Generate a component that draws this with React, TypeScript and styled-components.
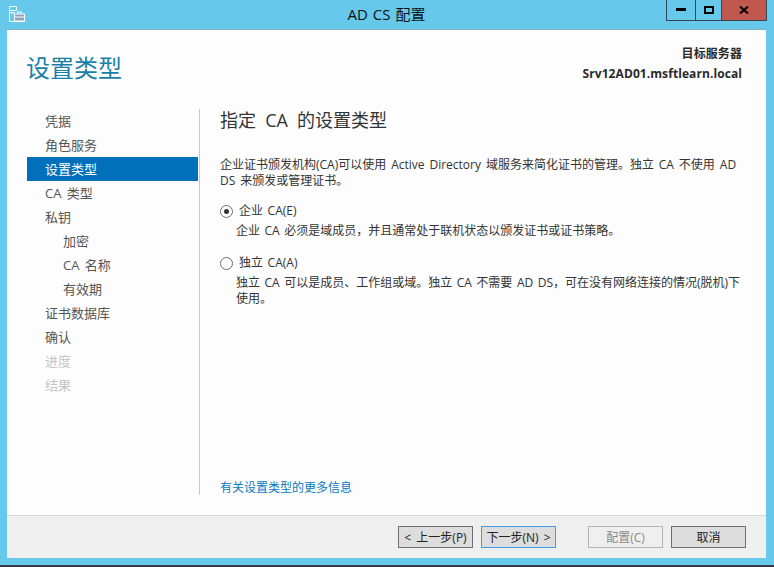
import React from "react";
import styled, { createGlobalStyle } from "styled-components";

const Global = createGlobalStyle`
  html, body { margin: 0; padding: 0; background: #333c44; }
  body { font-family: "Open Sans", "Noto Sans CJK SC", sans-serif; }
  * { box-sizing: border-box; }
`;
const LATIN = `"Open Sans", "Noto Sans CJK SC", sans-serif`;

const Frame = styled.div`
  width: 774px; height: 567px; background: #333c44;
`;
const Win = styled.div`
  width: 774px; height: 565px; background: #66c9eb;
  display: flex; flex-direction: column; padding: 0 8px 7px 7px;
`;
const TitleBar = styled.div`
  height: 30px; flex: none; display: grid; grid-template-columns: 1fr auto 1fr; align-items: start;
`;
const AppIcon = styled.svg`
  width: 16px; height: 16px; margin: 6px 0 0 2px;
`;
const Title = styled.div`
  font: 15px/28px ${LATIN}; color: #111; word-spacing: 1px;
`;
const Controls = styled.div`
  justify-self: end; display: flex; height: 21px; margin-right: -1px;
  border: 1px solid #37474f; border-top: 0;
`;
const Ctl = styled.div<{ $close?: boolean; $w: number }>`
  width: ${p => p.$w}px; display: flex; align-items: center; justify-content: center;
  background: ${p => (p.$close ? "#c0584f" : "transparent")};
  & + & { border-left: 1px solid #37474f; }
`;
const Panel = styled.div`
  flex: 1; background: #fdfdfd; display: flex; flex-direction: column; min-height: 0;
  box-shadow: 0 -1px 0 #7fb3c6;
`;
const Header = styled.div`
  height: 79px; flex: none; display: flex; justify-content: space-between; padding: 0 24px 0 20px;
`;
const Heading = styled.h1`
  margin: 20px 0 0 -1px; font: 400 24px/36px ${LATIN}; color: #1a80a6;
`;
const Target = styled.div`
  text-align: right; font: 700 12px/20px ${LATIN}; color: #2a2a2a; margin-top: 14px;
  letter-spacing: 0.08px;
`;
const Body = styled.div`
  flex: 1; display: flex; min-height: 0; padding-bottom: 20px;
`;
const Nav = styled.div`
  width: 193px; flex: none; border-right: 1px solid #c8c8c8; padding: 0 1px 0 20px;
`;
const NavItem = styled.div<{ $active?: boolean; $sub?: boolean; $off?: boolean }>`
  height: 24px; font: 13px/24px ${LATIN}; word-spacing: 2px;
  padding-left: ${p => (p.$sub ? 36 : 18)}px;
  color: ${p => (p.$active ? "#fff" : p.$off ? "#c4c4c4" : "#555")};
  background: ${p => (p.$active ? "#0070bb" : "transparent")};
`;
const Main = styled.div`
  flex: 1; display: flex; flex-direction: column; padding: 0 24px 0 20px; min-width: 0;
  margin-bottom: -1px;
`;
const H2 = styled.h2`
  margin: 0; font: 400 18px/22px ${LATIN}; color: #333; word-spacing: 4.5px;
`;
const Para = styled.p`
  margin: 26px 0 0; font: 12px/16px ${LATIN}; color: #333; word-spacing: 1.8px;
`;
const Option = styled.div<{ $gap: number }>`
  margin-top: ${p => p.$gap}px;
`;
const RadioRow = styled.div`
  display: flex; align-items: center; gap: 6px; font: 12px/16px ${LATIN}; color: #333; word-spacing: 1.5px;
`;
const RadioMark = styled.span<{ $on?: boolean }>`
  width: 13px; height: 13px; border-radius: 50%; border: 1px solid #6e6e6e; background: #fff;
  display: flex; align-items: center; justify-content: center; flex: none;
  &::after { content: ""; width: 5px; height: 5px; border-radius: 50%; background: ${p => (p.$on ? "#333" : "transparent")}; }
`;
const Desc = styled.div`
  margin: 4px 0 0 16px; font: 12px/16px ${LATIN}; color: #333; word-spacing: 1.4px;
`;
const More = styled.a`
  margin-top: auto; font: 12px/16px ${LATIN}; color: #0a78c0; text-decoration: none;
`;
const Footer = styled.div`
  height: 43px; flex: none; background: #efefef; border-top: 1px solid #d8d8d8;
  display: flex; align-items: flex-start; padding: 10px 20px 0 391px;
`;
const Btn = styled.div<{ $focus?: boolean; $off?: boolean; $ml?: number }>`
  width: 75px; height: 22px; display: flex; align-items: center; justify-content: center;
  padding-top: 1px;
  margin-left: ${p => p.$ml ?? 0}px; font: 12px/20px ${LATIN}; word-spacing: 2px;
  background: ${p => (p.$off ? "#efefef" : "#dddddd")};
  border: 1px solid ${p => (p.$focus ? "#3d9be9" : p.$off ? "#b4b4b4" : "#707070")};
  color: ${p => (p.$off ? "#8a8a8a" : "#222")};
  white-space: pre;
`;

export default function App() {
  return (
    <Frame>
      <Global />
      <Win>
        <TitleBar>
          <AppIcon viewBox="0 0 16 16" fill="none">
            <path d="M.5 .5h7v4h-7zM.5 4.500v11h15" stroke="#fff" />
            <path d="M1.500 6h4v1.500h-4z" fill="#fff" />
            <path d="M5.500 8h10v7h-10z" fill="#8aa3b5" stroke="#fff" />
            <path d="M8.500 8v-2h4v2" stroke="#fff" />
            <path d="M6 11h9" stroke="#fff" />
          </AppIcon>
          <Title>AD CS 配置</Title>
          <Controls>
            <Ctl $w={28}>
              <svg width="11" height="4" viewBox="0 0 11 4"><path d="M0 0h10v3H0z" fill="#000" /></svg>
            </Ctl>
            <Ctl $w={26}>
              <svg width="10" height="8" viewBox="0 0 10 8"><path d="M1 1h8v6H1z" fill="none" stroke="#000" strokeWidth="2" /></svg>
            </Ctl>
            <Ctl $close $w={45}>
              <svg width="10" height="8" viewBox="0 0 10 8"><path d="M1 .5l8 7M9 .5l-8 7" stroke="#000" strokeWidth="2" /></svg>
            </Ctl>
          </Controls>
        </TitleBar>
        <Panel>
          <Header>
            <Heading>设置类型</Heading>
            <Target>目标服务器<br />Srv12AD01.msftlearn.local</Target>
          </Header>
          <Body>
            <Nav>
              <NavItem>凭据</NavItem>
              <NavItem>角色服务</NavItem>
              <NavItem $active>设置类型</NavItem>
              <NavItem>CA 类型</NavItem>
              <NavItem>私钥</NavItem>
              <NavItem $sub>加密</NavItem>
              <NavItem $sub>CA 名称</NavItem>
              <NavItem $sub>有效期</NavItem>
              <NavItem>证书数据库</NavItem>
              <NavItem>确认</NavItem>
              <NavItem $off>进度</NavItem>
              <NavItem $off>结果</NavItem>
            </Nav>
            <Main>
              <H2>指定 CA 的设置类型</H2>
              <Para>企业证书颁发机构(CA)可以使用 Active Directory 域服务来简化证书的管理。独立 CA 不使用 AD DS 来颁发或管理证书。</Para>
              <Option $gap={14}>
                <RadioRow><RadioMark $on />企业 CA(E)</RadioRow>
                <Desc>企业 CA 必须是域成员，并且通常处于联机状态以颁发证书或证书策略。</Desc>
              </Option>
              <Option $gap={16}>
                <RadioRow><RadioMark />独立 CA(A)</RadioRow>
                <Desc>独立 CA 可以是成员、工作组或域。独立 CA 不需要 AD DS，可在没有网络连接的情况(脱机)下使用。</Desc>
              </Option>
              <More>有关设置类型的更多信息</More>
            </Main>
          </Body>
          <Footer>
            <Btn>{"< 上一步(P)"}</Btn>
            <Btn $focus $ml={8}>{"下一步(N) >"}</Btn>
            <Btn $off $ml={32}>配置(C)</Btn>
            <Btn $ml={8}>取消</Btn>
          </Footer>
        </Panel>
      </Win>
    </Frame>
  );
}
